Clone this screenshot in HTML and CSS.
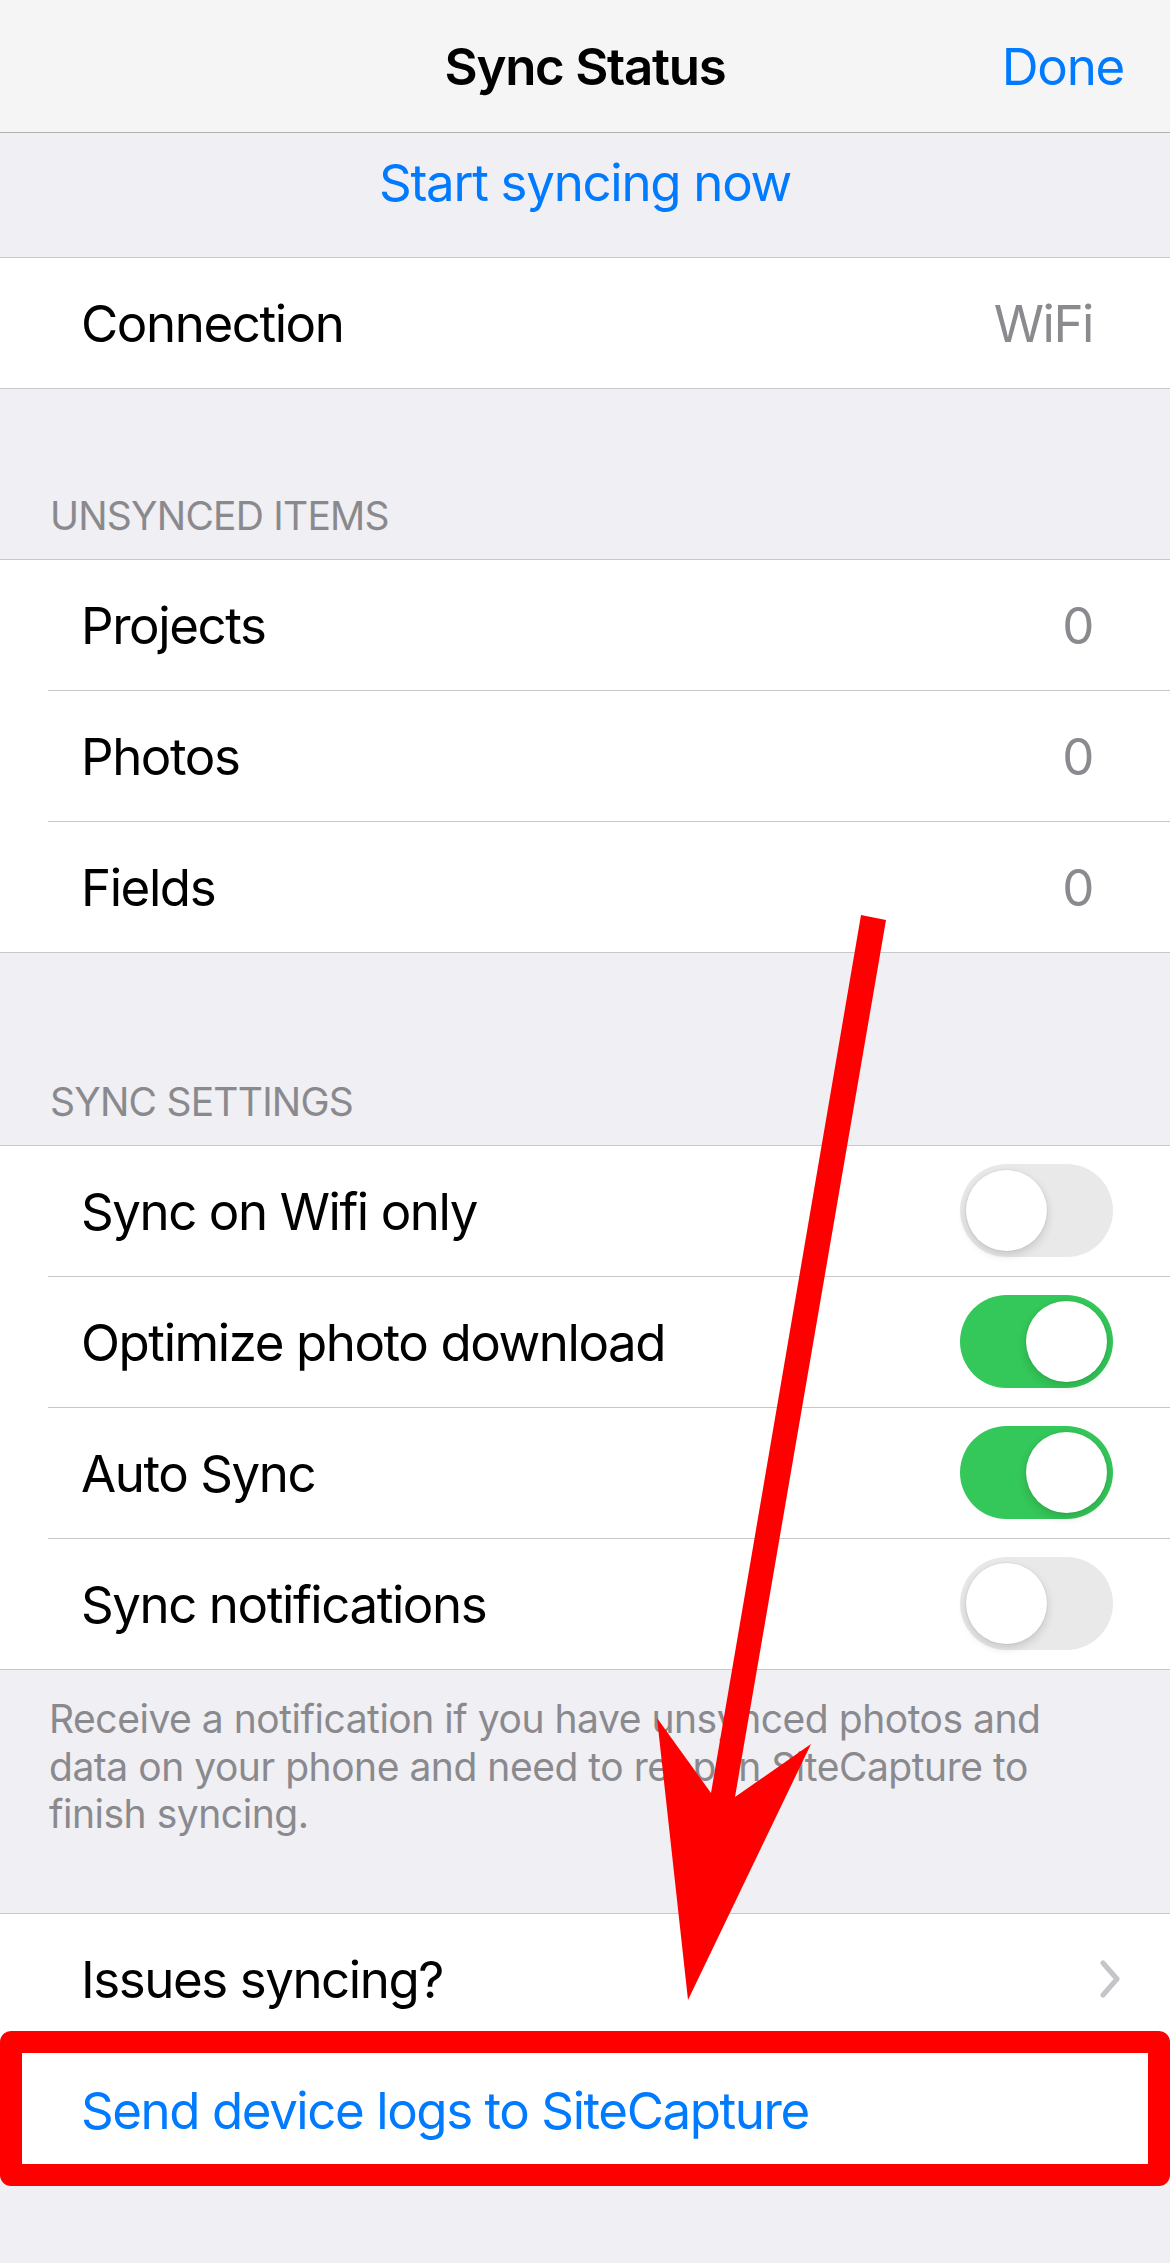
FILE: index.html
```html
<!DOCTYPE html>
<html lang="en">
<head>
    <meta charset="UTF-8">
    <title>Sync Status</title>
    <link rel="stylesheet" href="styles.css">
</head>
<body>
    <div class="screen">
        <header class="navbar">
            <span class="nav-title">Sync Status</span>
            <a class="nav-done">Done</a>
        </header>

        <div class="sync-now">Start syncing now</div>

        <div class="group">
            <div class="cell">
                <div class="cell-inner">
                    <span class="cell-label">Connection</span>
                    <span class="cell-value">WiFi</span>
                </div>
            </div>
        </div>

        <div class="section-header header-unsynced">UNSYNCED ITEMS</div>
        <div class="group">
            <div class="cell">
                <div class="cell-inner">
                    <span class="cell-label">Projects</span>
                    <span class="cell-value">0</span>
                </div>
            </div>
            <div class="cell">
                <div class="cell-inner">
                    <span class="cell-label">Photos</span>
                    <span class="cell-value">0</span>
                </div>
            </div>
            <div class="cell">
                <div class="cell-inner">
                    <span class="cell-label">Fields</span>
                    <span class="cell-value">0</span>
                </div>
            </div>
        </div>

        <div class="section-header header-settings">SYNC SETTINGS</div>
        <div class="group">
            <div class="cell">
                <div class="cell-inner">
                    <span class="cell-label">Sync on Wifi only</span>
                    <span class="switch"><span class="knob"></span></span>
                </div>
            </div>
            <div class="cell">
                <div class="cell-inner">
                    <span class="cell-label">Optimize photo download</span>
                    <span class="switch on"><span class="knob"></span></span>
                </div>
            </div>
            <div class="cell">
                <div class="cell-inner">
                    <span class="cell-label">Auto Sync</span>
                    <span class="switch on"><span class="knob"></span></span>
                </div>
            </div>
            <div class="cell">
                <div class="cell-inner">
                    <span class="cell-label">Sync notifications</span>
                    <span class="switch"><span class="knob"></span></span>
                </div>
            </div>
        </div>
        <p class="section-footer">
            Receive a notification if you have unsynced photos and<br>
            data on your phone and need to reopen SiteCapture to<br>
            finish syncing.
        </p>

        <div class="group">
            <div class="cell">
                <div class="cell-inner">
                    <span class="cell-label">Issues syncing?</span>
                    <svg class="chevron" width="20" height="38" viewBox="0 0 20 38">
                        <polyline points="3,3 17,19 3,35" fill="none" stroke="#c4c4c9" stroke-width="5" stroke-linecap="round" stroke-linejoin="round"/>
                    </svg>
                </div>
            </div>
            <div class="cell">
                <div class="cell-inner">
                    <span class="cell-label link">Send device logs to SiteCapture</span>
                </div>
            </div>
        </div>

        <div class="filler"></div>
    </div>

    <!-- annotation drawn over the screenshot -->
    <svg class="annotations" width="1170" height="2263" viewBox="0 0 1170 2263">
        <polygon points="861,915 886,920 735,1797 811,1744 688,2000 657,1718 711,1793" fill="#ff0000"/>
        <rect x="11" y="2042" width="1148" height="133" fill="none" stroke="#ff0000" stroke-width="22" stroke-linejoin="round"/>
    </svg>
</body>
</html>
```

FILE: styles.css
```css
body {
    margin: 0;
    font-family: 'Inter', 'Roboto', sans-serif;
    background-color: #efeff4;
    color: #000;
}
.screen {
    position: relative;
    width: 1170px;
    min-height: 100vh;
    display: flex;
    flex-direction: column;
}
.navbar {
    height: 132px;
    border-bottom: 1px solid #b1b1b4;
    background-color: #f5f5f5;
    display: flex;
    align-items: center;
    justify-content: center;
    position: relative;
}
.nav-title {
    font-size: 51px;
    font-weight: 600;
    letter-spacing: -0.025em;
}
.nav-done {
    position: absolute;
    right: 46px;
    top: 0;
    line-height: 134px;
    font-size: 51px;
    color: #007aff;
    letter-spacing: -0.025em;
}
.sync-now {
    height: 125px;
    border-bottom: 1px solid #c8c7cc;
    box-sizing: border-box;
    display: flex;
    align-items: flex-start;
    justify-content: center;
    padding-top: 19px;
    font-size: 51px;
    color: #007aff;
    letter-spacing: -0.025em;
}
.group {
    background-color: #fff;
    border-bottom: 1px solid #c8c7cc;
}
.section-header + .group,
.section-footer + .group {
    border-top: 1px solid #c8c7cc;
}
.cell {
    padding-left: 48px;
}
.cell-inner {
    height: 131px;
    box-sizing: border-box;
    padding: 1px 48px 0 33px;
    display: flex;
    align-items: center;
    justify-content: space-between;
    border-bottom: 1px solid #c8c7cc;
}
.cell:last-child .cell-inner {
    height: 130px;
    border-bottom: none;
}
.cell-label {
    font-size: 51px;
    letter-spacing: -0.028em;
}
.cell-label.link {
    color: #007aff;
}
.cell-value {
    font-size: 51px;
    color: #8a8a8f;
    margin-right: 29px;
    letter-spacing: -0.028em;
}
.section-header {
    display: flex;
    align-items: flex-end;
    padding: 0 0 20px 50px;
    font-size: 39px;
    line-height: 47px;
    color: #8a8a8e;
    letter-spacing: -0.02em;
}
.header-unsynced {
    height: 150px;
}
.header-settings {
    height: 172px;
}
.section-footer {
    margin: 0;
    height: 243px;
    box-sizing: border-box;
    padding: 25px 40px 0 49px;
    font-size: 39px;
    line-height: 47.5px;
    color: #8a8a8e;
    letter-spacing: -0.012em;
}
.switch {
    width: 153px;
    height: 93px;
    box-sizing: border-box;
    padding: 6px;
    border-radius: 47px;
    background-color: #e9e9ea;
    display: flex;
    justify-content: flex-start;
    margin-right: 9px;
    margin-top: -2px;
}
.switch.on {
    background-color: #34c759;
    justify-content: flex-end;
}
.knob {
    width: 81px;
    height: 81px;
    border-radius: 50%;
    background-color: #fff;
    box-shadow: 0 4px 10px rgba(0,0,0,0.15), 0 0 0 1px rgba(0,0,0,0.04);
}
.chevron {
    margin-right: 2px;
    margin-top: -1px;
}
.filler {
    flex-grow: 1;
}
.annotations {
    position: absolute;
    top: 0;
    left: 0;
    pointer-events: none;
}
```
